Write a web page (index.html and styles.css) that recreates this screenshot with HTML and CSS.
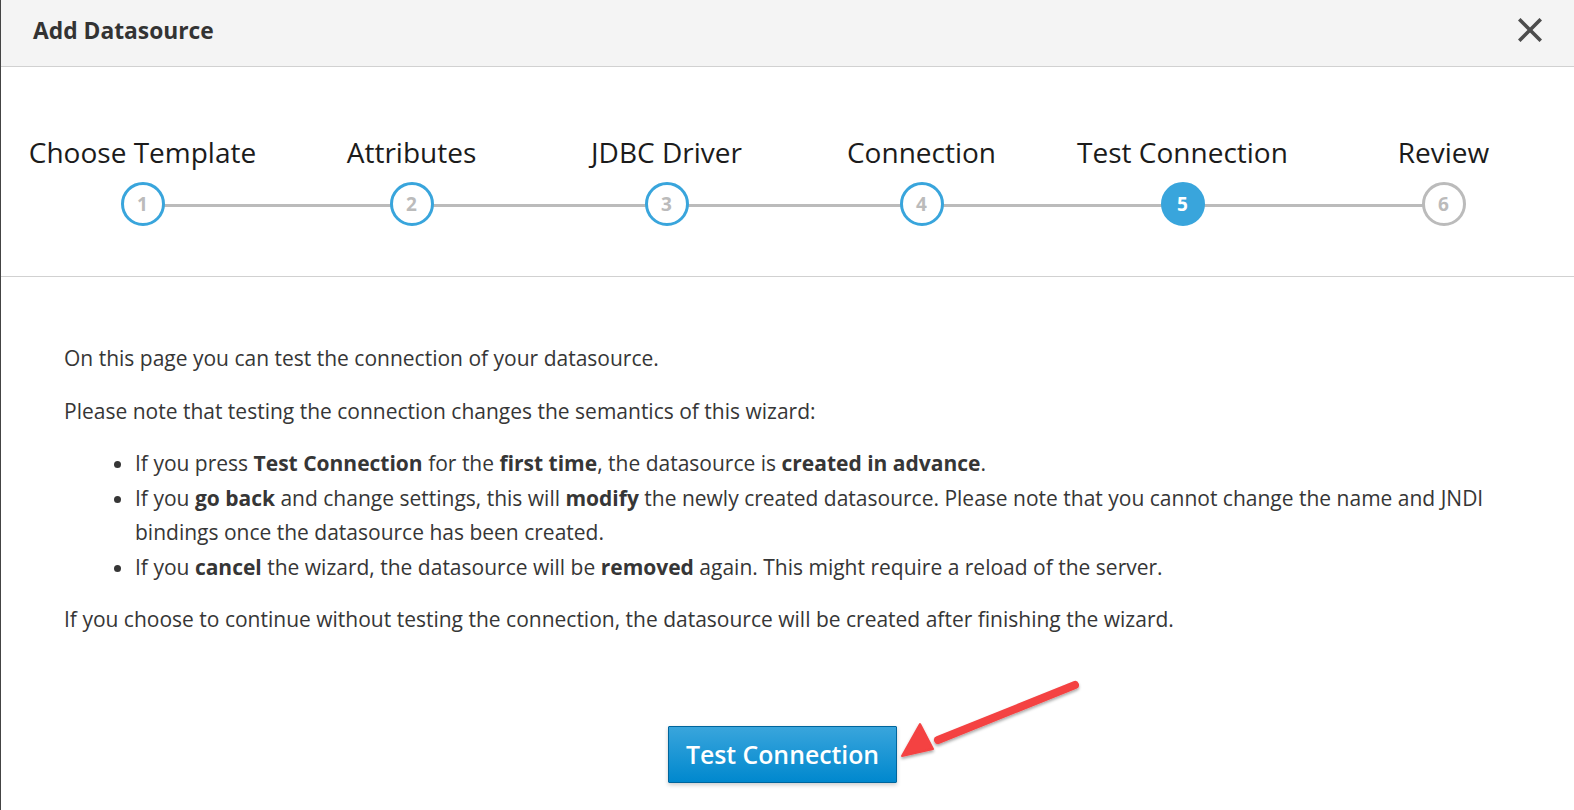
FILE: index.html
```html
<!DOCTYPE html>
<html lang="en">
<head>
<meta charset="utf-8">
<title>Add Datasource</title>
<link rel="stylesheet" href="styles.css">
</head>
<body>
<div class="modal">
  <header class="modal-header">
    <h4 class="modal-title">Add Datasource</h4>
    <button class="close" aria-label="Close">
      <svg width="24" height="24" viewBox="0 0 24 24"><path d="M2.5 2.5 L21.5 21.5 M21.5 2.5 L2.5 21.5" stroke="#4d4d4d" stroke-width="3.6" stroke-linecap="square" fill="none"/></svg>
    </button>
  </header>

  <ol class="wizard-steps">
    <li class="step done"><span class="step-label">Choose Template</span><span class="step-circle">1</span></li>
    <li class="step done"><span class="step-label">Attributes</span><span class="step-circle">2</span></li>
    <li class="step done"><span class="step-label">JDBC Driver</span><span class="step-circle">3</span></li>
    <li class="step done"><span class="step-label">Connection</span><span class="step-circle">4</span></li>
    <li class="step active"><span class="step-label">Test Connection</span><span class="step-circle">5</span></li>
    <li class="step"><span class="step-label">Review</span><span class="step-circle">6</span></li>
  </ol>

  <div class="wizard-body">
    <p>On this page you can test the connection of your datasource.</p>
    <p>Please note that testing the connection changes the semantics of this wizard:</p>
    <ul>
      <li>If you press <b>Test Connection</b> for the <b>first time</b>, the datasource is <b>created in advance</b>.</li>
      <li>If you <b>go back</b> and change settings, this will <b>modify</b> the newly created datasource. Please note that you cannot change the name and JNDI bindings once the datasource has been created.</li>
      <li>If you <b>cancel</b> the wizard, the datasource will be <b>removed</b> again. This might require a reload of the server.</li>
    </ul>
    <p>If you choose to continue without testing the connection, the datasource will be created after finishing the wizard.</p>
    <div class="button-row">
      <button class="btn-primary">Test Connection</button>
    </div>
  </div>

  <svg class="annotation-arrow" width="200" height="100" viewBox="0 0 200 100">
    <defs>
      <filter id="sh" x="-20%" y="-20%" width="140%" height="160%">
        <feDropShadow dx="0" dy="2" stdDeviation="1.5" flood-color="#000" flood-opacity="0.35"/>
      </filter>
    </defs>
    <g filter="url(#sh)">
      <path d="M175 13 L38 68" stroke="#f44242" stroke-width="8" stroke-linecap="round" fill="none"/>
      <path d="M2 84 L20 52 L33 77 Z" fill="#f44242" stroke="#f44242" stroke-width="2" stroke-linejoin="round"/>
    </g>
  </svg>
</div>
</body>
</html>
```

FILE: styles.css
```css
* { box-sizing: border-box; }

html, body {
  margin: 0;
  padding: 0;
  background: #fff;
}

body {
  font-family: "Open Sans", "Liberation Sans", sans-serif;
  color: #363636;
}

.modal {
  position: relative;
  width: 1574px;
  height: 810px;
  border-left: 1px solid #444;
  overflow: hidden;
}

.modal-header {
  height: 67px;
  background: #f4f4f4;
  border-bottom: 1px solid #d1d1d1;
  display: flex;
  align-items: center;
  justify-content: space-between;
  padding: 0 32px 0 32px;
}

.modal-title {
  margin: 0;
  font-size: 22.8px;
  font-weight: 700;
  color: #333;
  padding-bottom: 6px;
}

.close {
  border: 0;
  background: transparent;
  padding: 0;
  width: 24px;
  height: 24px;
  margin-bottom: 6px;
  cursor: pointer;
}
.close svg { display: block; }

.wizard-steps {
  list-style: none;
  margin: 0;
  padding: 66px 0 50px 5px;
  display: grid;
  grid-template-columns: 273px 265px 245px 265px 257px 265px;
  border-bottom: 1px solid #d1d1d1;
}

.step {
  position: relative;
  display: flex;
  flex-direction: column;
  align-items: center;
}

.step-label {
  font-size: 28px;
  line-height: 38px;
  color: #1b1b1b;
  white-space: nowrap;
}

.step-circle {
  position: relative;
  z-index: 1;
  margin-top: 11px;
  width: 44px;
  height: 44px;
  border-radius: 50%;
  border: 3px solid #bbb;
  background: #fff;
  color: #bbb;
  font-weight: 700;
  font-size: 19px;
  display: flex;
  align-items: center;
  justify-content: center;
}

.step.done .step-circle { border-color: #39a5dc; }
.step.active .step-circle {
  border-color: #39a5dc;
  background: #39a5dc;
  color: #fff;
}

.step:not(:last-child)::after {
  content: "";
  position: absolute;
  left: 50%;
  width: 100%;
  top: 71px;
  height: 3px;
  background: #bbb;
}
.step:nth-child(2)::after { width: calc(100% + 2px); }

.wizard-body {
  padding: 64px 73px 0 63px;
  font-size: 21px;
  line-height: 34.5px;
}

.wizard-body p { margin: 0 0 18px; }

.wizard-body ul {
  margin: 0 0 18px;
  padding-left: 71px;
}

.wizard-body b { font-weight: 700; color: #363636; }

.button-row {
  display: flex;
  justify-content: center;
  margin-top: 89px;
}

.btn-primary {
  font-family: "Open Sans", "Liberation Sans", sans-serif;
  font-size: 24.8px;
  font-weight: 600;
  color: #fff;
  width: 229px;
  height: 57px;
  border: 1px solid #00659c;
  border-radius: 1px;
  background: linear-gradient(to bottom, #39a5dc 0%, #0088ce 100%);
  box-shadow: 0 2px 4px rgba(0, 0, 0, 0.2);
  padding: 0;
}

.annotation-arrow {
  position: absolute;
  left: 899px;
  top: 672px;
  overflow: visible;
}
```
